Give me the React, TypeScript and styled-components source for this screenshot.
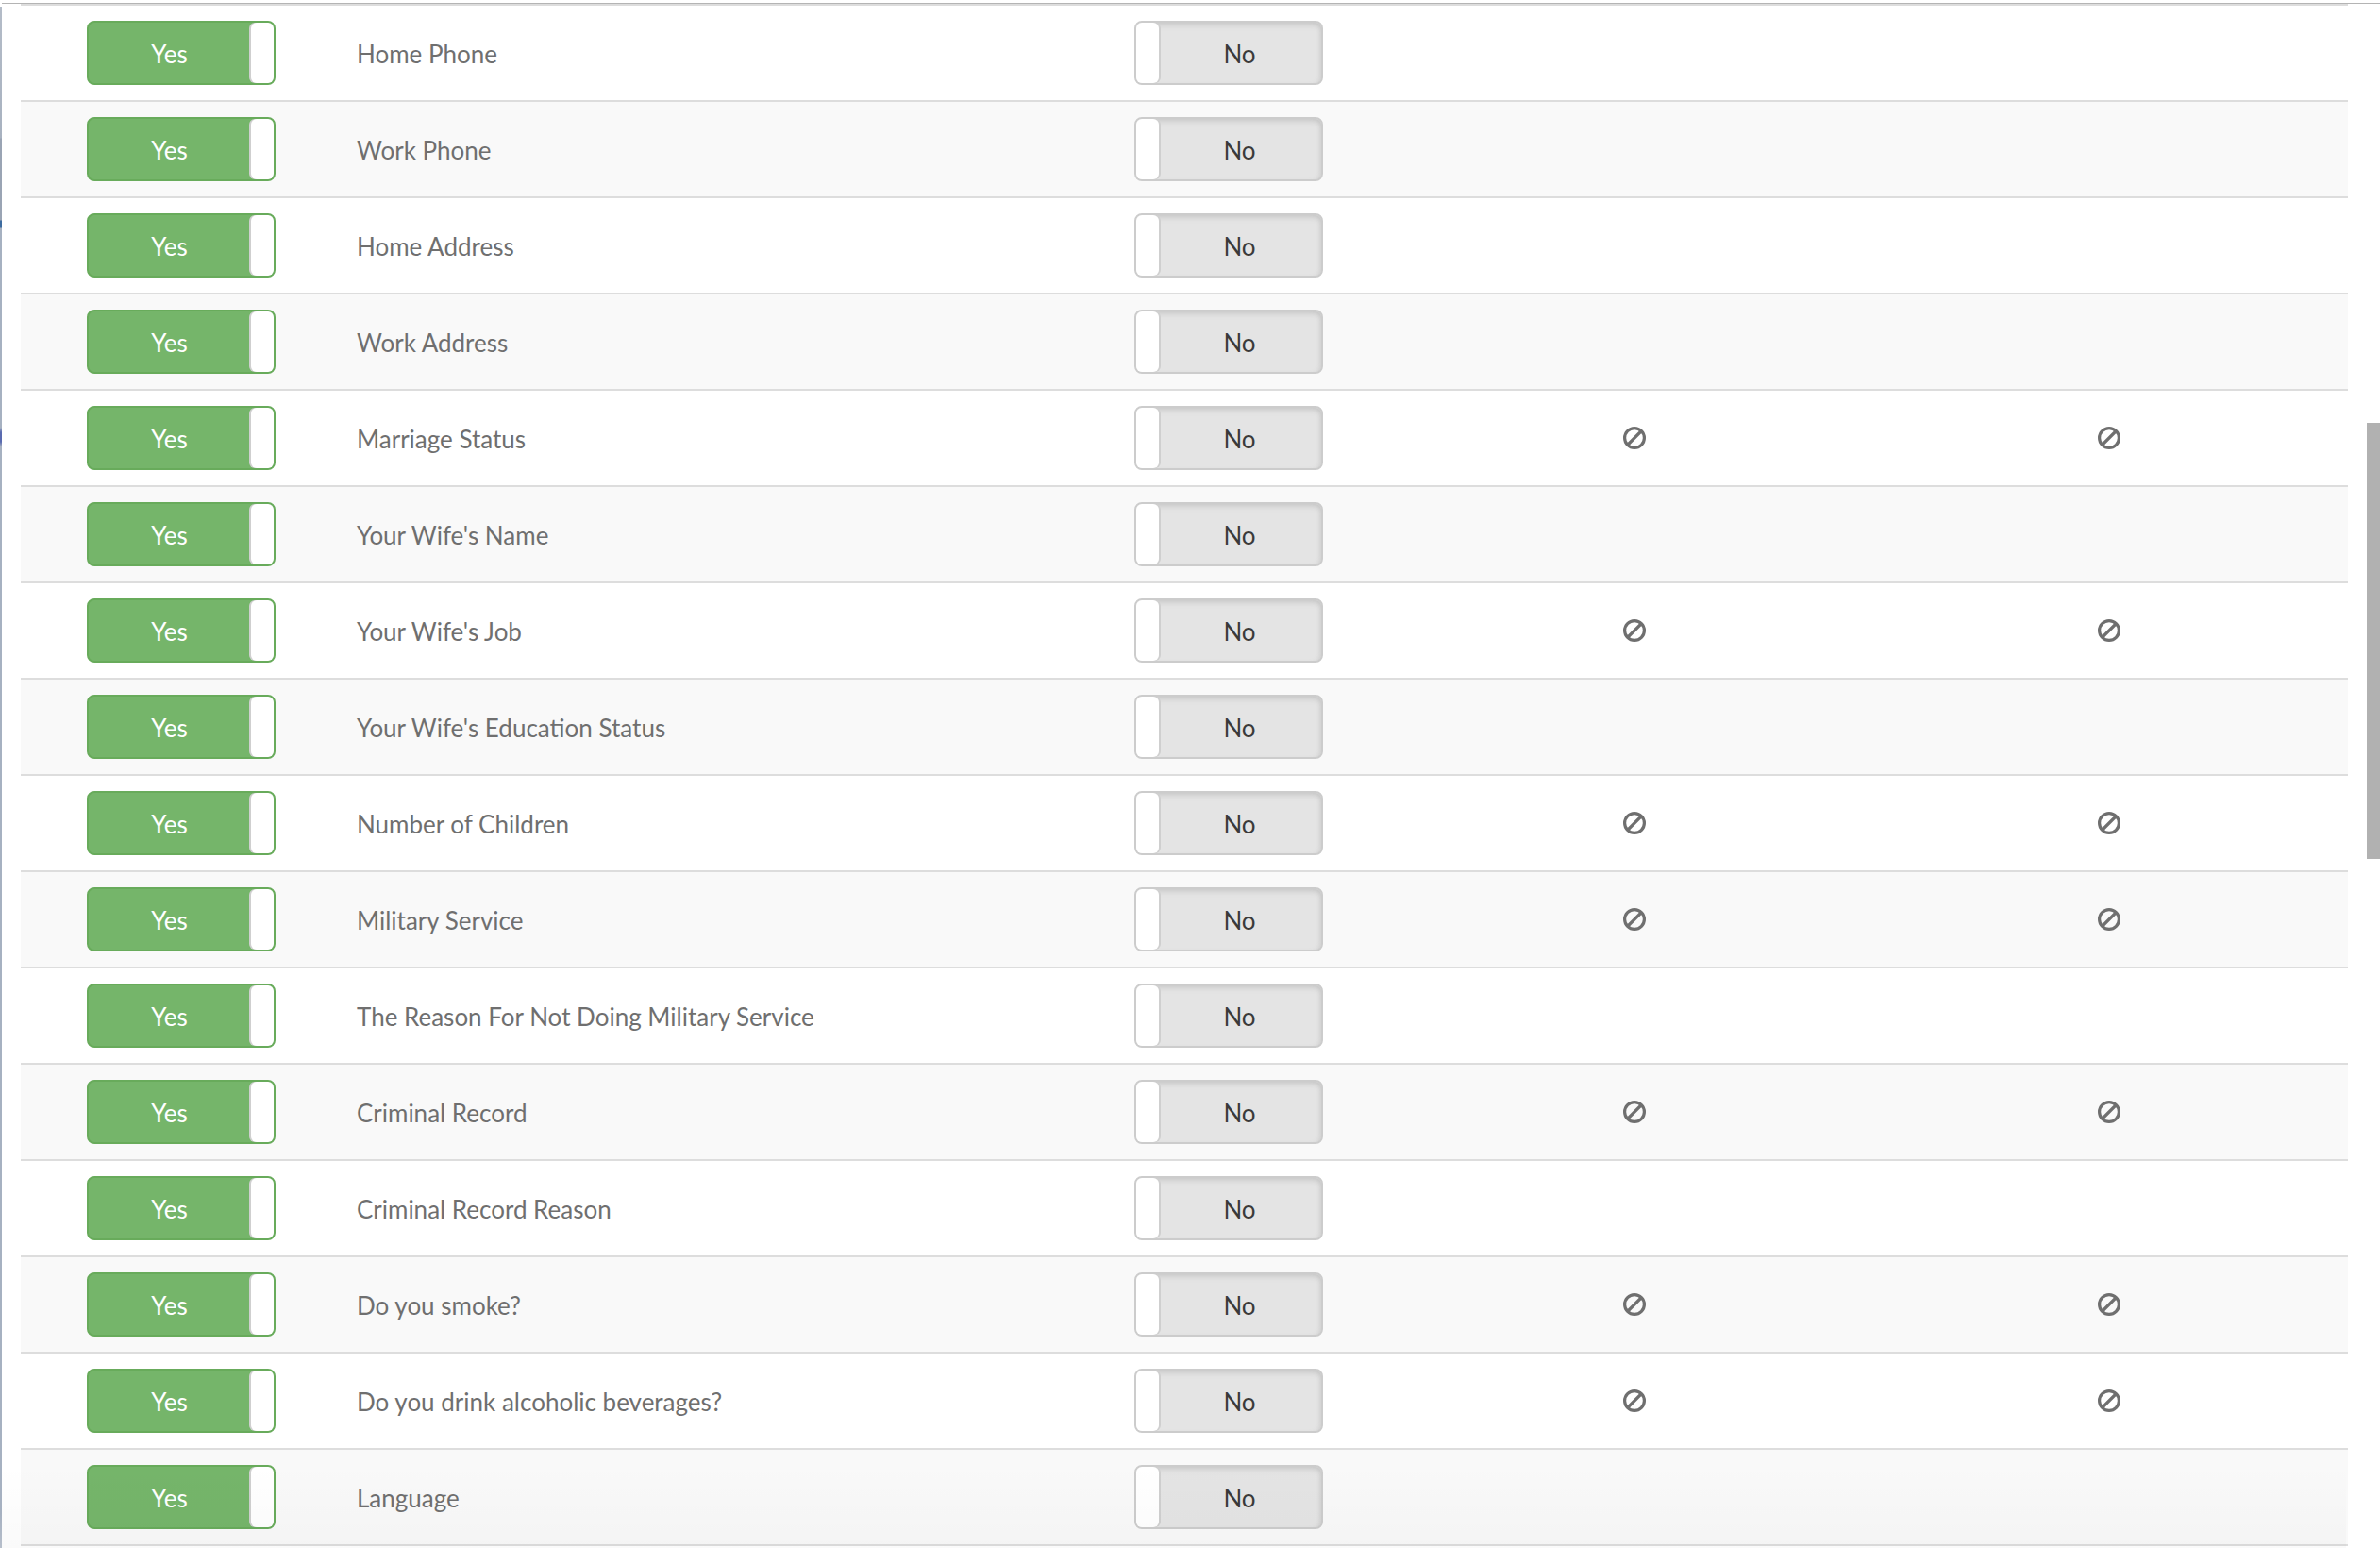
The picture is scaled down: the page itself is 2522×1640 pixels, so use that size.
import React from "react";
import styled, { createGlobalStyle } from "styled-components";

const GlobalStyle = createGlobalStyle`
	html, body {
		margin: 0;
		padding: 0;
		background: #fff;
		overflow: hidden;
	}
`;

const fields = [
	{ name: "Home Phone" },
	{ name: "Work Phone" },
	{ name: "Home Address" },
	{ name: "Work Address" },
	{ name: "Marriage Status", blocked: true },
	{ name: "Your Wife's Name" },
	{ name: "Your Wife's Job", blocked: true },
	{ name: "Your Wife's Education Status" },
	{ name: "Number of Children", blocked: true },
	{ name: "Military Service", blocked: true },
	{ name: "The Reason For Not Doing Military Service" },
	{ name: "Criminal Record", blocked: true },
	{ name: "Criminal Record Reason" },
	{ name: "Do you smoke?", blocked: true },
	{ name: "Do you drink alcoholic beverages?", blocked: true },
	{ name: "Language" },
];

const Page = styled.div`
	position: relative;
	display: flex;
	width: 2522px;
	height: 1640px;
	overflow: hidden;
	box-sizing: border-box;
	padding-top: 3px;
	font-family: "Lato", "Open Sans", sans-serif;
`;

const TopLine = styled.div`
	position: absolute;
	top: 3px;
	left: 2px;
	right: 0;
	height: 1px;
	background: #b4b4b4;
`;

const SideStrip = styled.div`
	width: 2px;
	flex: none;
	background: linear-gradient(
		to bottom,
		#fff 0,
		#fff 4px,
		#b4bcc8 4px,
		#a8b2c0 143px,
		#9aa4b4 144px,
		#9aa4b4 230px,
		#3d6ca0 231px,
		#3d6ca0 238px,
		#a6b1c1 239px,
		#a6b1c1 450px,
		#5a6bb0 455px,
		#5a6bb0 465px,
		#a6b1c1 470px,
		#a6b1c1 1600px,
		#b8c0cc 1640px
	);
`;

const Table = styled.div`
	width: 2466px;
	margin: 1px 0 0 20px;
	flex: none;
`;

const Row = styled.div<{ $striped: boolean }>`
	display: grid;
	grid-template-columns: 356px 824px 279px 502px 505px;
	align-items: center;
	height: 100px;
	border-top: 2px solid #dddddd;
	background: ${(p) => (p.$striped ? "#f9f9f9" : "#ffffff")};

	&:last-child {
		border-bottom: 2px solid #dddddd;
	}
`;

const ToggleCell = styled.div`
	padding-left: 70px;
`;

const Label = styled.div`
	font-size: 26px;
	color: #6f6f6f;
	line-height: 34px;
	padding-top: 1px;
`;

const Switch = styled.div<{ $on: boolean }>`
	position: relative;
	width: 200px;
	height: 68px;
	box-sizing: border-box;
	border: 2px solid ${(p) => (p.$on ? "#68ab5b" : "#cccccc")};
	border-radius: 8px;
	display: flex;
	align-items: center;
	justify-content: center;
	font-size: 26px;
	color: ${(p) => (p.$on ? "#ffffff" : "#3a3a3a")};
	background: ${(p) => (p.$on ? "#75b56a" : "#e4e4e4")};
	box-shadow: ${(p) =>
		p.$on ? "none" : "inset 0 6px 6px -4px #c4c4c4, inset -4px 0 5px -3px #cccccc"};
	padding: ${(p) => (p.$on ? "1px 25px 0 0" : "1px 0 0 23px")};
`;

const Knob = styled.div<{ $on: boolean }>`
	position: absolute;
	top: 0;
	bottom: 0;
	${(p) => (p.$on ? "right: 0;" : "left: 0;")}
	width: 24px;
	background: #ffffff;
	border-radius: 6px;
	box-shadow: ${(p) => (p.$on ? "-2px 0 0 #cfcfcf" : "2px 0 0 #cfcfcf")};
`;

const IconCell = styled.div<{ $trim?: boolean }>`
	display: flex;
	justify-content: center;
	padding-right: ${(p) => (p.$trim ? "2px" : "0")};
`;

const Scrollbar = styled.div`
	position: absolute;
	top: 448px;
	right: 0;
	width: 14px;
	height: 462px;
	background: #b1b1b1;
`;

const BottomFade = styled.div`
	position: absolute;
	left: 2px;
	right: 36px;
	bottom: 0;
	height: 90px;
	pointer-events: none;
	background: linear-gradient(to bottom, rgba(0, 0, 0, 0), rgba(0, 0, 0, 0.02));
`;

const BlockedIcon = () => (
	<svg width="26" height="26" viewBox="0 0 26 26" fill="none" stroke="#6f6f6f" strokeWidth="3.2">
		<circle cx="13" cy="13" r="10.4" />
		<line x1="6" y1="20" x2="20" y2="6" />
	</svg>
);

const App = () => {
	return (
		<>
			<GlobalStyle />
			<Page>
				<TopLine />
				<SideStrip />
				<Table>
					{fields.map((field, i) => (
						<Row key={field.name} $striped={i % 2 === 1}>
							<ToggleCell>
								<Switch $on>
									Yes
									<Knob $on />
								</Switch>
							</ToggleCell>
							<Label>{field.name}</Label>
							<Switch $on={false}>
								<Knob $on={false} />
								No
							</Switch>
							{field.blocked && (
								<>
									<IconCell>
										<BlockedIcon />
									</IconCell>
									<IconCell $trim>
										<BlockedIcon />
									</IconCell>
								</>
							)}
						</Row>
					))}
				</Table>
				<BottomFade />
				<Scrollbar />
			</Page>
		</>
	);
};

export default App;
